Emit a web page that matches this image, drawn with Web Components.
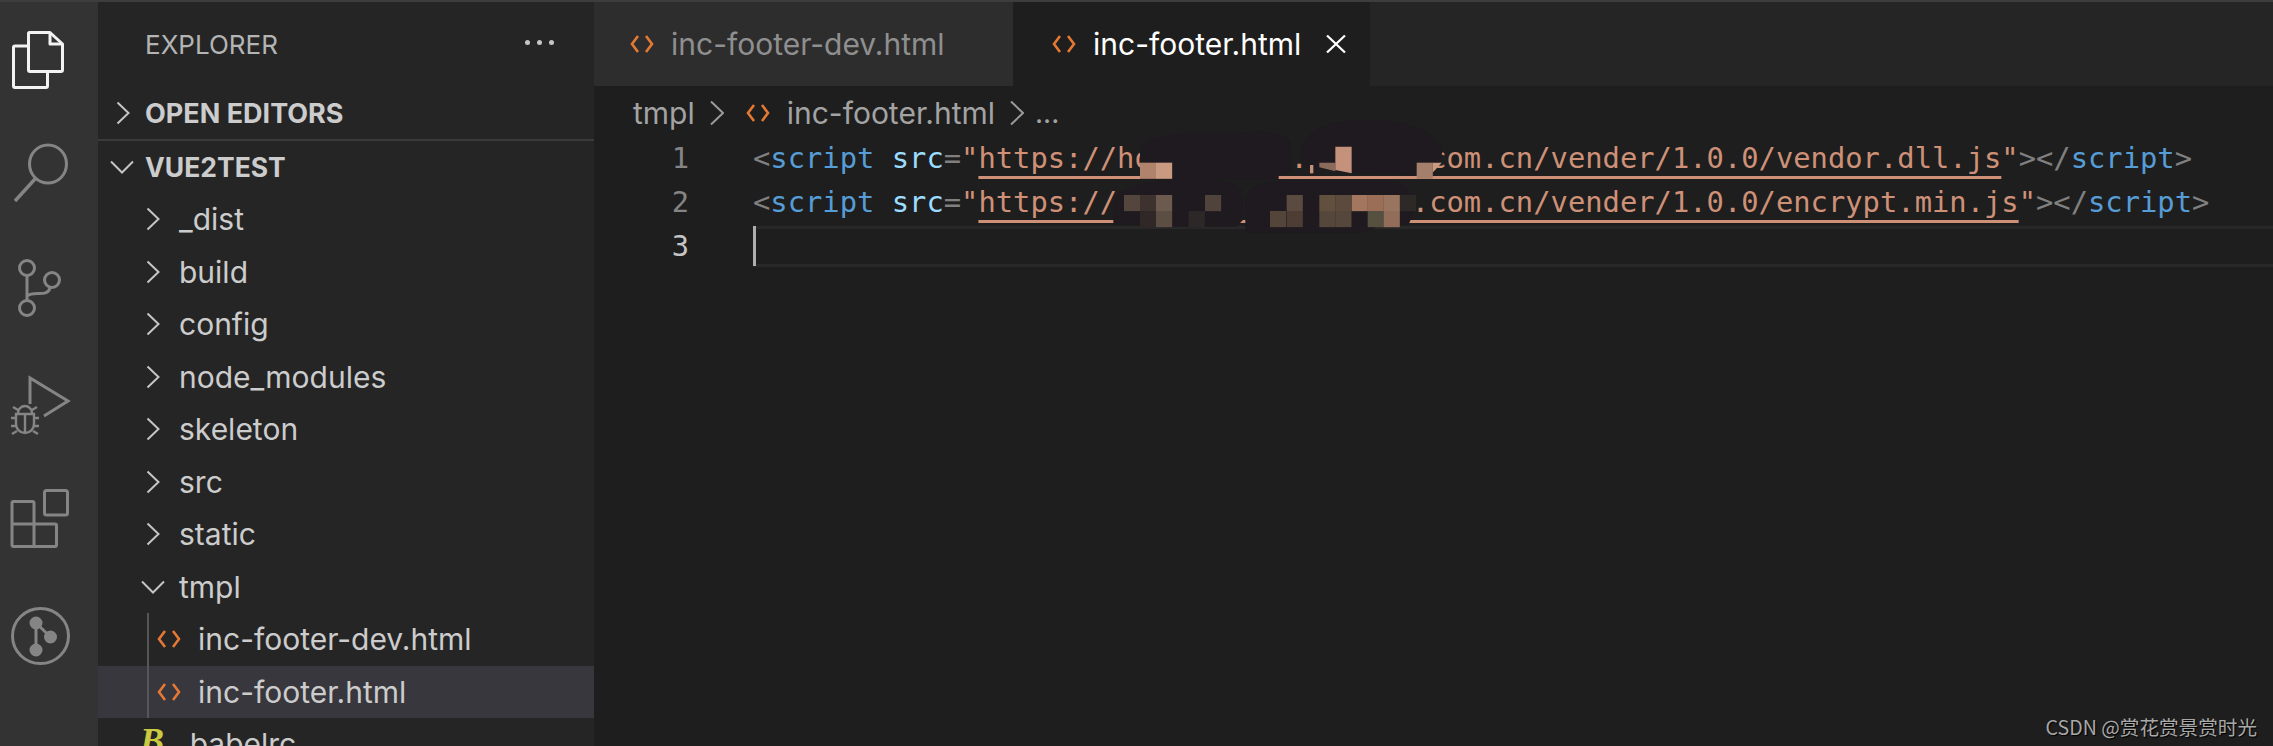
<!DOCTYPE html>
<html>
<head>
<meta charset="utf-8">
<style>
  html, body { margin: 0; height: 100%; background: #1e1e1e; overflow: hidden; }
  body { font-family: "Inter", "Liberation Sans", sans-serif; }
</style>
</head>
<body>
<vs-app>
  <vs-activity-bar slot="activity"></vs-activity-bar>
  <vs-sidebar slot="sidebar">
    <vs-tree-row kind="closed" left="18" gap="15" strong style="font-size:27px" label="OPEN EDITORS" divider></vs-tree-row>
    <vs-tree-row kind="open" left="12" gap="11" strong label="VUE2TEST"></vs-tree-row>
    <vs-tree-row kind="closed" left="48" gap="19" label="_dist"></vs-tree-row>
    <vs-tree-row kind="closed" left="48" gap="19" label="build"></vs-tree-row>
    <vs-tree-row kind="closed" left="48" gap="19" label="config"></vs-tree-row>
    <vs-tree-row kind="closed" left="48" gap="19" label="node_modules"></vs-tree-row>
    <vs-tree-row kind="closed" left="48" gap="19" label="skeleton"></vs-tree-row>
    <vs-tree-row kind="closed" left="48" gap="19" label="src"></vs-tree-row>
    <vs-tree-row kind="closed" left="48" gap="19" label="static"></vs-tree-row>
    <vs-tree-row kind="open" left="43" gap="14" label="tmpl"></vs-tree-row>
    <vs-tree-row kind="html" left="59" gap="17" guide label="inc-footer-dev.html"></vs-tree-row>
    <vs-tree-row kind="html" left="59" gap="17" guide selected label="inc-footer.html"></vs-tree-row>
    <vs-tree-row kind="babel" left="42" gap="17" label=".babelrc"></vs-tree-row>
  </vs-sidebar>
  <vs-editor slot="editor">
    <vs-tab-bar slot="tabs">
      <vs-tab style="width:419px" pad="36" label="inc-footer-dev.html"></vs-tab>
      <vs-tab style="width:357px" pad="39" active label="inc-footer.html"></vs-tab>
    </vs-tab-bar>
    <vs-breadcrumbs slot="crumbs"></vs-breadcrumbs>
    <vs-code-line num="1"><span class="p">&lt;</span><span class="k">script</span> <span class="a">src</span><span class="p">=</span><span class="s">"</span><span class="u">https://ho        .      .com.cn/vender/1.0.0/vendor.dll.js</span><span class="s">"</span><span class="p">&gt;&lt;/</span><span class="k">script</span><span class="p">&gt;</span></vs-code-line>
    <vs-code-line num="2"><span class="p">&lt;</span><span class="k">script</span> <span class="a">src</span><span class="p">=</span><span class="s">"</span><span class="u">https://                 .com.cn/vender/1.0.0/encrypt.min.js</span><span class="s">"</span><span class="p">&gt;&lt;/</span><span class="k">script</span><span class="p">&gt;</span></vs-code-line>
    <vs-code-line num="3" active></vs-code-line>
    <vs-redaction slot="over"></vs-redaction>
  </vs-editor>
  <vs-watermark slot="over">CSDN @赏花赏景赏时光</vs-watermark>
</vs-app>

<script>
const UI_FONT = '"Inter", "Liberation Sans", sans-serif';

const HTML_ICON = `<svg width="24" height="20" viewBox="0 0 24 20" fill="none" stroke="#e37933" stroke-width="2.6"><path d="M8 2 L2 10 L8 18"/><path d="M16 2 L22 10 L16 18"/></svg>`;

class VsApp extends HTMLElement {
    constructor() {
        super();
        this.attachShadow({mode: "open"}).innerHTML = `
        <style>
            :host { display: block; width: 2273px; height: 746px; position: relative; overflow: hidden; background: #1e1e1e; }
            .top { height: 2px; background: #3d3d3d; }
            .main { display: flex; height: 744px; }
        </style>
        <div class="top"></div>
        <div class="main">
            <slot name="activity"></slot>
            <slot name="sidebar"></slot>
            <slot name="editor"></slot>
        </div>
        <slot name="over"></slot>`;
    }
}

class VsActivityBar extends HTMLElement {
    constructor() {
        super();
        this.attachShadow({mode: "open"}).innerHTML = `
        <style>
            :host { display: block; width: 98px; flex: none; background: #333333; }
            svg { display: block; }
        </style>
        <svg width="98" height="744" viewBox="0 2 98 744" fill="none" stroke="#858585" stroke-width="3">
            <!-- files -->
            <g stroke="#f2f2f2" stroke-linejoin="round">
                <path d="M28 46 H15 a1.5 1.5 0 0 0 -1.5 1.5 V86 a1.5 1.5 0 0 0 1.5 1.5 H46 a1.5 1.5 0 0 0 1.5 -1.5 V72"/>
                <path d="M29 32.5 H50 L62.5 44 V70 a1.5 1.5 0 0 1 -1.5 1.5 H30 a1.5 1.5 0 0 1 -1.5 -1.5 V33 Z"/>
                <path d="M50 33 V44 H62"/>
            </g>
            <!-- search -->
            <ellipse cx="48" cy="164" rx="18.5" ry="19"/>
            <path d="M35 179 L15 201" stroke-width="3.4"/>
            <!-- source control -->
            <circle cx="27" cy="268" r="7.5"/>
            <circle cx="52" cy="280" r="7.5"/>
            <circle cx="27" cy="308" r="7.5"/>
            <path d="M27 276 V300 M27 296 C34 290 47 298 50 288"/>
            <!-- run and debug -->
            <path d="M30 404 V378 L68 401 L44 416"/>
            <path d="M18 413 a7 7 0 0 1 14 0 M16 414 H34 V424 a9 9 0 0 1 -18 0 Z M25 414 V433 M16 418 H11 M34 418 H39 M16 426 H11 M34 426 H39 M17 431 L12 434 M33 431 L38 434 M18 410 L13 407 M32 410 L37 407" stroke-width="2.4"/>
            <!-- extensions -->
            <rect x="44.5" y="490.5" width="23" height="24.5" rx="2"/>
            <path d="M34 524 V503 a1.5 1.5 0 0 0 -1.5 -1.5 H13.5 a1.5 1.5 0 0 0 -1.5 1.5 V545 a1.5 1.5 0 0 0 1.5 1.5 H55 a1.5 1.5 0 0 0 1.5 -1.5 V525.5 a1.5 1.5 0 0 0 -1.5 -1.5 H12 M34 524 V546"/>
            <!-- git graph -->
            <ellipse cx="40.5" cy="636" rx="28" ry="27.5"/>
            <circle cx="36" cy="623" r="5" fill="#858585"/>
            <circle cx="50.5" cy="637" r="5" fill="#858585"/>
            <circle cx="36" cy="650" r="5" fill="#858585"/>
            <path d="M36 623 V650 M36 623 L50.5 637"/>
        </svg>`;
    }
}

class VsSidebar extends HTMLElement {
    constructor() {
        super();
        this.attachShadow({mode: "open"}).innerHTML = `
        <style>
            :host { display: block; width: 496px; flex: none; background: #252526; overflow: hidden; font-family: ${UI_FONT}; }
            .head { height: 85px; display: flex; align-items: center; padding: 0 40px 0 47px; box-sizing: border-box; }
            .title { flex: 1; font-size: 26px; color: #b4b4b4; }
            .dots { display: flex; gap: 7px; margin-top: -4px; }
            .dots i { width: 5px; height: 5px; border-radius: 50%; background: #c5c5c5; }
        </style>
        <div class="head"><span class="title">EXPLORER</span><span class="dots"><i></i><i></i><i></i></span></div>
        <slot></slot>`;
    }
}

class VsTreeRow extends HTMLElement {
    connectedCallback() {
        const kind = this.getAttribute("kind");
        let icon = "";
        if (kind === "closed") {
            icon = `<svg width="14" height="24" viewBox="0 0 14 24" fill="none" stroke="#c5c5c5" stroke-width="2"><path d="M1.5 1.5 L12.5 12 L1.5 22.5"/></svg>`;
        } else if (kind === "open") {
            icon = `<svg width="24" height="14" viewBox="0 0 24 14" fill="none" stroke="#c5c5c5" stroke-width="2"><path d="M1 1.5 L12 12.5 L23 1.5"/></svg>`;
        } else if (kind === "html") {
            icon = HTML_ICON;
        } else if (kind === "babel") {
            icon = `<span class="babel">B</span>`;
        }
        this.attachShadow({mode: "open"}).innerHTML = `
        <style>
            :host { display: flex; align-items: center; height: 52.5px; position: relative; box-sizing: content-box; color: #cccccc; font-size: 30px; white-space: nowrap; }
            :host([strong]) { font-size: 26.5px; font-weight: 700; height: 52px; }
            :host([divider]) { border-bottom: 2px solid #3a3a3b; }
            :host([selected]) { background: #37373d; }
            :host([guide])::before { content: ""; position: absolute; left: 49px; top: 0; bottom: 0; width: 2px; background: #565656; }
            svg { display: block; flex: none; }
            .babel { font: italic 700 36px "Liberation Serif", serif; color: #cbcb41; width: 24px; margin-top: -6px; }
        </style>
        ${icon}<span class="label">${this.getAttribute("label")}</span>`;
        this.style.paddingLeft = this.getAttribute("left") + "px";
        this.shadowRoot.querySelector(".label").style.marginLeft = this.getAttribute("gap") + "px";
    }
}

class VsEditor extends HTMLElement {
    constructor() {
        super();
        this.attachShadow({mode: "open"}).innerHTML = `
        <style>
            :host { display: block; flex: 1; min-width: 0; position: relative; background: #1e1e1e; }
            .code { display: block; }
        </style>
        <slot name="tabs"></slot>
        <slot name="crumbs"></slot>
        <div class="code"><slot></slot></div>
        <slot name="over"></slot>`;
    }
}

class VsTabBar extends HTMLElement {
    constructor() {
        super();
        this.attachShadow({mode: "open"}).innerHTML = `
        <style>
            :host { display: flex; height: 84px; background: #252526; font-family: ${UI_FONT}; }
        </style>
        <slot></slot>`;
    }
}

class VsTab extends HTMLElement {
    connectedCallback() {
        const active = this.hasAttribute("active");
        const close = active ? `<svg class="x" width="20" height="18" viewBox="0 0 20 18" fill="none" stroke="#ffffff" stroke-width="2.2"><path d="M1 0.5 L19 17.5 M19 0.5 L1 17.5"/></svg>` : "";
        this.attachShadow({mode: "open"}).innerHTML = `
        <style>
            :host { display: flex; align-items: center; flex: none; box-sizing: border-box; background: #2d2d2d; color: #8f8f8f; font-size: 30px; white-space: nowrap; }
            :host([active]) { background: #1e1e1e; color: #ffffff; }
            svg { display: block; flex: none; }
            .label { margin-left: 17px; }
            .x { margin-left: 25px; }
        </style>
        ${HTML_ICON}<span class="label">${this.getAttribute("label")}</span>${close}`;
        this.style.paddingLeft = this.getAttribute("pad") + "px";
    }
}

class VsBreadcrumbs extends HTMLElement {
    constructor() {
        super();
        const chevron = `<svg width="14" height="26" viewBox="0 0 14 26" fill="none" stroke="#9a9a9a" stroke-width="2"><path d="M1 1.5 L13 13 L1 24.5"/></svg>`;
        this.attachShadow({mode: "open"}).innerHTML = `
        <style>
            :host { display: flex; align-items: center; height: 50px; padding: 4px 0 0 39px; box-sizing: border-box; color: #a3a3a3; font-family: ${UI_FONT}; font-size: 30px; white-space: nowrap; }
            svg { display: block; flex: none; }
            .a { margin-left: 15px; }
            .b { margin-left: 22px; }
            .c { margin-left: 17px; }
            .d { margin-left: 15px; }
            .e { margin-left: 11px; font-size: 28px; }
        </style>
        <span>tmpl</span>
        <span class="a">${chevron}</span>
        <span class="b">${HTML_ICON}</span>
        <span class="c">inc-footer.html</span>
        <span class="d">${chevron}</span>
        <span class="e">...</span>`;
    }
}

class VsCodeLine extends HTMLElement {
    connectedCallback() {
        this.attachShadow({mode: "open"}).innerHTML = `
        <style>
            :host { display: block; height: 44px; font: 28.8px/44px "DejaVu Sans Mono", "Liberation Mono", monospace; }
            .row { display: flex; height: 44px; position: relative; }
            .num { width: 95px; flex: none; text-align: right; color: #858585; }
            :host([active]) .num { color: #c6c6c6; }
            .text { margin-left: 64px; white-space: pre; }
            :host([active]) .hl { position: absolute; left: 159px; right: 0; top: 2px; height: 41px; box-sizing: border-box; border-top: 3px solid #282828; border-bottom: 3px solid #282828; }
            :host([active]) .cursor { position: absolute; left: 159px; top: 2px; width: 3px; height: 40px; background: #aeafad; }
            ::slotted(.p) { color: #808080; }
            ::slotted(.k) { color: #569cd6; }
            ::slotted(.a) { color: #9cdcfe; }
            ::slotted(.s) { color: #ce9178; }
            ::slotted(.u) { color: #ce9178; text-decoration: underline; text-decoration-thickness: 2.5px; text-underline-offset: 8px; text-decoration-skip-ink: none; }
        </style>
        <div class="row">
            <span class="hl"></span>
            <span class="num">${this.getAttribute("num")}</span>
            <span class="text"><slot></slot></span>
            <span class="cursor"></span>
        </div>`;
    }
}

// the scribbled out host names; coordinates are 3x the page pixels
class VsRedaction extends HTMLElement {
    constructor() {
        super();
        const cells = [
            [120, 158, "#b0836c"], [168, 158, "#c99a80"], [950, 158, "#a47f6b"],
            [72, 255, "#54453d"], [120, 255, "#3e322e"], [168, 255, "#6c5a4f"], [315, 255, "#4f433b"],
            [560, 255, "#5a4a40"], [658, 255, "#62503f"], [706, 255, "#5c4a3c"], [755, 255, "#a3775f"],
            [803, 255, "#9b6e58"], [851, 255, "#99745f"], [900, 255, "#2d2926"],
            [120, 303, "#302826"], [168, 303, "#5d4e43"], [266, 303, "#2e2727"], [510, 303, "#54453a"],
            [560, 303, "#4e3d34"], [658, 303, "#55473c"], [706, 303, "#55473c"], [803, 303, "#55503f"],
            [851, 303, "#926e5a"]
        ].map(c => `<rect x="${c[0]}" y="${c[1]}" width="48.5" height="48.5" fill="${c[2]}"/>`).join("");
        this.attachShadow({mode: "open"}).innerHTML = `
        <style>
            :host { display: block; position: absolute; left: 506px; top: 108px; width: 420px; height: 130px; }
            svg { display: block; }
        </style>
        <svg width="420" height="130" viewBox="0 0 1260 390">
            <path fill="#1e1a1f" d="M120 208 V110 C150 75 250 62 400 70 C480 62 550 62 572 95 L575 190 L536 194 L536 208 Z"/>
            <path fill="#1e1a1f" d="M600 150 C600 70 660 30 800 30 C900 30 1000 50 1030 120 L1000 196 H950 L755 190 L620 172 Z"/>
            <path fill="#1e1a1f" d="M40 342 V262 C70 235 150 212 220 206 C300 204 400 206 425 240 L432 326 L410 350 H215 L40 342 Z"/>
            <path fill="#1e1a1f" d="M436 368 V262 C450 225 500 210 600 210 L880 210 C915 220 945 260 945 300 L925 345 L830 352 L790 368 Z"/>
            <path fill="#c4917a" d="M630 165 H640 V190 H630 Z"/>
            <path fill="#8a6a5a" d="M658 158 H706 V184 L658 172 Z"/>
            <path fill="#c4917a" d="M706 110 H755 V190 L706 180 Z"/>
            <path fill="#c99a80" d="M998 158 H1025 L998 188 Z"/>
            ${cells}
        </svg>`;
    }
}

class VsWatermark extends HTMLElement {
    constructor() {
        super();
        this.attachShadow({mode: "open"}).innerHTML = `
        <style>
            :host { display: block; position: absolute; right: 16px; bottom: 6px; color: #a8a8a8; font: 19.6px/26px "Noto Sans CJK SC", "Noto Sans", sans-serif; text-shadow: 1px 1px 1px #000; white-space: nowrap; }
        </style>
        <slot></slot>`;
    }
}

customElements.define("vs-app", VsApp);
customElements.define("vs-activity-bar", VsActivityBar);
customElements.define("vs-sidebar", VsSidebar);
customElements.define("vs-tree-row", VsTreeRow);
customElements.define("vs-editor", VsEditor);
customElements.define("vs-tab-bar", VsTabBar);
customElements.define("vs-tab", VsTab);
customElements.define("vs-breadcrumbs", VsBreadcrumbs);
customElements.define("vs-code-line", VsCodeLine);
customElements.define("vs-redaction", VsRedaction);
customElements.define("vs-watermark", VsWatermark);
</script>
</body>
</html>
